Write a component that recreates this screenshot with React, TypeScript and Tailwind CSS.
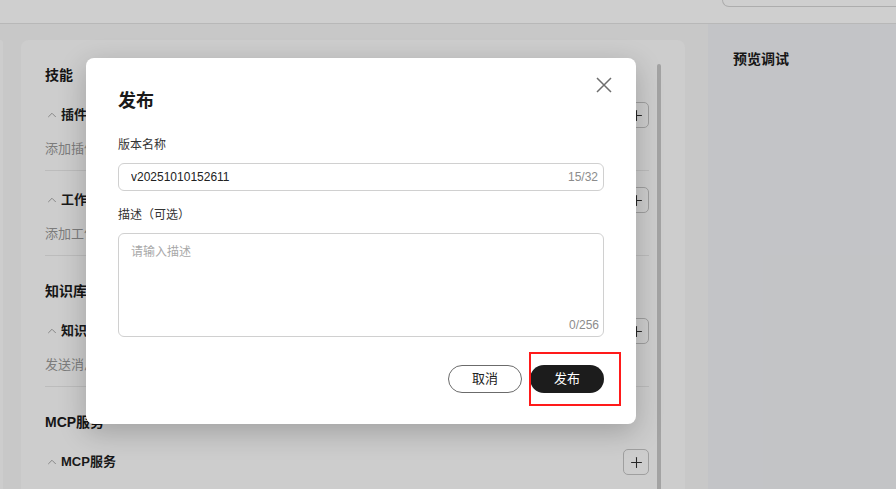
import { ChevronUp, Plus } from "lucide-react";

interface Block {
  name: string;
  desc: string;
}

interface Section {
  title: string;
  blocks: Block[];
}

const SECTIONS: Section[] = [
  {
    title: "技能",
    blocks: [
      { name: "插件", desc: "添加插件，让智能体调用外部 API 和服务" },
      { name: "工作流", desc: "添加工作流，用于处理复杂的业务逻辑" },
    ],
  },
  {
    title: "知识库",
    blocks: [{ name: "知识库", desc: "发送消息时，智能体可以引用知识库中的内容回答" }],
  },
  {
    title: "MCP服务",
    blocks: [{ name: "MCP服务", desc: "添加 MCP 服务，扩展智能体的能力" }],
  },
];

const SkillBlock = ({ block, first }: { block: Block; first: boolean }) => (
  <div className={first ? "mt-[17px]" : "mt-4"}>
    {/* Row */}
    <div className="flex h-[26px] items-center justify-between">
      <div className="flex items-center gap-[1px]">
        <ChevronUp size={14} strokeWidth={1.5} className="text-[#9a9a9a]" />
        <span className="ml-[1px] text-[13px] font-semibold text-[#1f1f1f]">{block.name}</span>
      </div>
      <button className="flex h-[26px] w-[26px] items-center justify-center rounded-[5px] border border-[#c4c4c4]">
        <Plus size={17} strokeWidth={1.5} className="text-[#2f2f2f]" />
      </button>
    </div>
    <p className="mt-[11px] text-[13px] leading-5 text-[#999999]">{block.desc}</p>
    <div className="mt-[11px] h-px bg-[#e8e8e8]" />
  </div>
);

const PublishDialog = () => (
  <div className="absolute left-[86px] top-[58px] w-[550px] rounded-lg bg-white px-8 pb-[31px] pt-[30px] shadow-[0_8px_28px_rgba(0,0,0,0.22)]">
    {/* Close */}
    <button className="absolute right-6 top-[19px] text-[#6e6e6e]">
      <svg width="16" height="16" viewBox="0 0 16 16" fill="none" stroke="currentColor" strokeWidth="1.5">
        <path d="M1 1 15 15M15 1 1 15" />
      </svg>
    </button>

    <h2 className="text-[18px] font-bold leading-[26px] text-[#1a1a1a]">发布</h2>

    <label className="mt-[22px] block text-[12px] leading-[18px] text-[#333333]">版本名称</label>
    <div className="relative mt-[9px]">
      <input
        readOnly
        value="v20251010152611"
        className="h-[28px] w-full rounded-md border border-[#d0d0d0] px-3 pr-12 text-[12px] text-[#222222] outline-none"
      />
      <span className="absolute right-[6px] top-1/2 -translate-y-1/2 text-[12px] text-[#8c8c8c]">15/32</span>
    </div>

    <label className="mt-[15px] block text-[12px] leading-[18px] text-[#333333]">描述（可选）</label>
    <div className="relative mt-[9px]">
      <textarea
        placeholder="请输入描述"
        className="block h-[104px] w-full resize-none rounded-md border border-[#d0d0d0] px-3 pt-[9px] text-[12px] leading-[18px] text-[#222222] outline-none placeholder:text-[#a8a8a8]"
      />
      <span className="absolute bottom-[3px] right-[5px] text-[12px] text-[#8c8c8c]">0/256</span>
    </div>

    <div className="mt-7 flex justify-end gap-2">
      <button className="flex h-[28px] w-[74px] items-center justify-center rounded-full border border-[#6b6b6b] text-[13px] text-[#222222]">
        取消
      </button>
      <button className="flex h-[28px] w-[74px] items-center justify-center rounded-full bg-[#1c1c1c] text-[13px] text-white">
        发布
      </button>
    </div>
  </div>
);

const App = () => {
  return (
    <div className="relative h-[489px] w-[896px] overflow-hidden bg-[#f7f7f7] font-['Liberation_Sans','Noto_Sans_CJK_SC',sans-serif]">
      {/* Header */}
      <div className="flex h-6 justify-end border-b border-[#e3e3e3] bg-white">
        <div className="h-[7px] w-[174px] rounded-bl-lg border-b border-l border-[#d6d6d6]" />
      </div>

      <div className="flex h-[465px]">
        {/* Editor area */}
        <div className="flex w-[708px] pt-4">
          <div className="w-[3px] rounded-tr-lg bg-[#fdfdfd]" />
          <div className="ml-[18px] flex w-[664px] rounded-t-lg bg-[#fdfdfd] pl-6 pr-6 pt-[25px]">
            <div className="flex-1 pr-2">
              {SECTIONS.map((section, i) => (
                <div key={section.title} className={i === 0 ? "" : "mt-[25px]"}>
                  <h3 className="text-[14px] font-bold leading-5 text-[#1a1a1a]">{section.title}</h3>
                  {section.blocks.map((block, j) => (
                    <SkillBlock key={block.name} block={block} first={j === 0} />
                  ))}
                </div>
              ))}
            </div>
            {/* Scrollbar */}
            <div className="-mt-px w-1 pt-0">
              <div className="h-[440px] w-1 rounded-full bg-[#c9c9c9]" />
            </div>
          </div>
        </div>

        {/* Preview */}
        <div className="flex-1 bg-[#f1f2f5] pl-[25px] pt-[25px]">
          <h3 className="text-[14px] font-bold leading-5 text-[#1a1a1a]">预览调试</h3>
        </div>
      </div>

      {/* Mask */}
      <div className="absolute inset-0 bg-black/[0.19]" />

      <PublishDialog />

      {/* Highlight */}
      <div className="absolute left-[529px] top-[352px] h-[54px] w-[92px] border-2 border-[#ff1a1a]" />
    </div>
  );
};

export default App;
